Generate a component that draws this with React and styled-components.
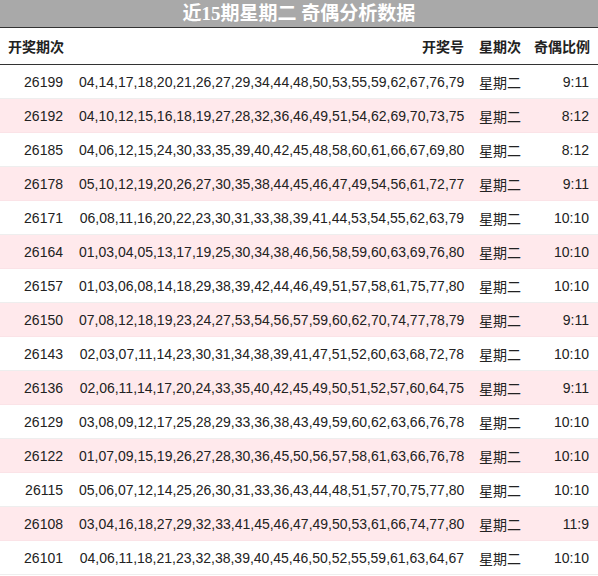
import React from "react";
import styled, { createGlobalStyle } from "styled-components";

const Global = createGlobalStyle`
  html, body { margin: 0; padding: 0; background: #fff; }
  body { font-family: "Liberation Sans", "Noto Sans CJK SC", sans-serif; color: #222; }
`;

const rows = [
  ["26199", "04,14,17,18,20,21,26,27,29,34,44,48,50,53,55,59,62,67,76,79", "9:11"],
  ["26192", "04,10,12,15,16,18,19,27,28,32,36,46,49,51,54,62,69,70,73,75", "8:12"],
  ["26185", "04,06,12,15,24,30,33,35,39,40,42,45,48,58,60,61,66,67,69,80", "8:12"],
  ["26178", "05,10,12,19,20,26,27,30,35,38,44,45,46,47,49,54,56,61,72,77", "9:11"],
  ["26171", "06,08,11,16,20,22,23,30,31,33,38,39,41,44,53,54,55,62,63,79", "10:10"],
  ["26164", "01,03,04,05,13,17,19,25,30,34,38,46,56,58,59,60,63,69,76,80", "10:10"],
  ["26157", "01,03,06,08,14,18,29,38,39,42,44,46,49,51,57,58,61,75,77,80", "10:10"],
  ["26150", "07,08,12,18,19,23,24,27,53,54,56,57,59,60,62,70,74,77,78,79", "9:11"],
  ["26143", "02,03,07,11,14,23,30,31,34,38,39,41,47,51,52,60,63,68,72,78", "10:10"],
  ["26136", "02,06,11,14,17,20,24,33,35,40,42,45,49,50,51,52,57,60,64,75", "9:11"],
  ["26129", "03,08,09,12,17,25,28,29,33,36,38,43,49,59,60,62,63,66,76,78", "10:10"],
  ["26122", "01,07,09,15,19,26,27,28,30,36,45,50,56,57,58,61,63,66,76,78", "10:10"],
  ["26115", "05,06,07,12,14,25,26,30,31,33,36,43,44,48,51,57,70,75,77,80", "10:10"],
  ["26108", "03,04,16,18,27,29,32,33,41,45,46,47,49,50,53,61,66,74,77,80", "11:9"],
  ["26101", "04,06,11,18,21,23,32,38,39,40,45,46,50,52,55,59,61,63,64,67", "10:10"],
];

const Wrap = styled.div`
  width: 598px;
`;

const Title = styled.div`
  height: 27px;
  line-height: 27px;
  background: #a9a9a9;
  border-bottom: 1px solid #333;
  color: #fff;
  font-family: "Liberation Serif", "Noto Sans CJK SC", serif;
  font-weight: bold;
  font-size: 19px;
  text-align: center;
  white-space: nowrap;
`;

const Table = styled.table`
  width: 598px;
  border-collapse: collapse;
  table-layout: fixed;
`;

const Th = styled.th`
  height: 36px;
  padding: 0 ${(p) => p.$pr || 8}px 0 ${(p) => p.$pl || 8}px;
  font-size: 14px;
  font-weight: bold;
  text-align: ${(p) => p.$align || "right"};
  border-bottom: 1px solid #333;
  white-space: nowrap;
`;

const Tr = styled.tr`
  background: ${(p) => (p.$alt ? "#ffe9ec" : "#fff")};
`;

const Td = styled.td`
  height: 33px;
  padding: 0 ${(p) => p.$pr || 8}px 0 ${(p) => p.$pl || 8}px;
  font-size: 14px;
  text-align: ${(p) => p.$align || "right"};
  border-bottom: 1px solid ${(p) => (p.$alt ? "#fbe3e7" : "#eee")};
  white-space: nowrap;
`;

export default function App() {
  return (
    <Wrap>
      <Global />
      <Title>近15期星期二 奇偶分析数据</Title>
      <Table>
        <colgroup>
          <col style={{ width: 71 }} />
          <col style={{ width: 401 }} />
          <col style={{ width: 54 }} />
          <col style={{ width: 72 }} />
        </colgroup>
        <thead>
          <tr>
            <Th>开奖期次</Th>
            <Th>开奖号</Th>
            <Th $align="left" $pl={7}>星期次</Th>
            <Th $pr={9}>奇偶比例</Th>
          </tr>
        </thead>
        <tbody>
          {rows.map((r, i) => (
            <Tr key={r[0]} $alt={i % 2 === 1}>
              <Td $alt={i % 2 === 1}>{r[0]}</Td>
              <Td $alt={i % 2 === 1}>{r[1]}</Td>
              <Td $alt={i % 2 === 1} $align="left" $pl={7}>星期二</Td>
              <Td $alt={i % 2 === 1} $pr={9}>{r[2]}</Td>
            </Tr>
          ))}
        </tbody>
      </Table>
    </Wrap>
  );
}
